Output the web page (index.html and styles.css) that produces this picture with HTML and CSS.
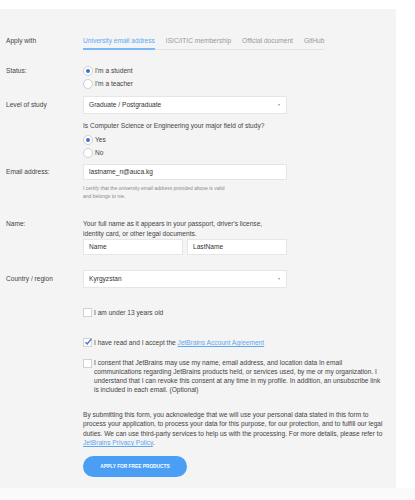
FILE: index.html
```html
<!DOCTYPE html>
<html lang="en">
<head>
    <meta charset="UTF-8">
    <title>Apply for free products</title>
    <link rel="stylesheet" href="styles.css">
</head>
<body>
    <div id="panel">
        <div class="row tabsRow">
            <div class="label">Apply with</div>
            <div class="tabs">
                <div class="tab active">University email address</div>
                <div class="tab">ISIC/ITIC membership</div>
                <div class="tab">Official document</div>
                <div class="tab">GitHub</div>
            </div>
        </div>

        <div class="row statusRow">
            <div class="label line">Status:</div>
            <div class="field">
                <div class="line"><span class="radio on"></span>I'm a student</div>
                <div class="line"><span class="radio"></span>I'm a teacher</div>
            </div>
        </div>

        <div class="row levelRow">
            <div class="label boxLabel">Level of study</div>
            <div class="field">
                <div class="select">Graduate / Postgraduate<span class="caret">&#9662;</span></div>
                <div class="question">Is Computer Science or Engineering your major field of study?</div>
                <div class="line"><span class="radio on"></span>Yes</div>
                <div class="line"><span class="radio"></span>No</div>
            </div>
        </div>

        <div class="row emailRow">
            <div class="label emailLabel">Email address:</div>
            <div class="field">
                <div class="text wide">lastname_n@auca.kg</div>
                <div class="hint">I certify that the university email address provided above is valid<br>and belongs to me.</div>
            </div>
        </div>

        <div class="row nameRow">
            <div class="label nameLabel">Name:</div>
            <div class="field">
                <div class="desc">Your full name as it appears in your passport, driver's license,<br>identity card, or other legal documents.</div>
                <div class="names">
                    <div class="text">Name</div>
                    <div class="text">LastName</div>
                </div>
            </div>
        </div>

        <div class="row countryRow">
            <div class="label boxLabel">Country / region</div>
            <div class="field">
                <div class="select">Kyrgyzstan<span class="caret">&#9662;</span></div>
            </div>
        </div>

        <div class="checks">
            <div class="line under13"><span class="check"></span>I am under 13 years old</div>
            <div class="line accept"><span class="check on"><svg width="8" height="8" viewBox="0 0 8 8"><path d="M1.5 4.2 L3.2 6 L7.4 0.8" fill="none" stroke="#3f73d8" stroke-width="1.3"/></svg></span>I have read and I accept the&nbsp;<a href="#">JetBrains Account Agreement</a></div>
            <div class="consent"><span class="check"></span><p>I consent that JetBrains may use my name, email address, and location data In email communications regarding JetBrains products held, or services used, by me or my organization. I understand that I can revoke this consent at any time in my profile. In addition, an unsubscribe link is included in each email. (Optional)</p></div>
            <p class="notice">By submitting this form, you acknowledge that we will use your personal data stated in this form to process your application, to process your data for this purpose, for our protection, and to fulfill our legal duties. We can use third-party services to help us with the processing. For more details, please refer to <a href="#">JetBrains Privacy Policy</a>.</p>
            <button>APPLY FOR FREE PRODUCTS</button>
        </div>
    </div>
    <div id="below"></div>
</body>
</html>
```

FILE: styles.css
```css
body {
    margin: 0;
    padding-top: 9px;
    font-family: 'Liberation Sans', Arial, sans-serif;
    font-size: 6.6px;
    color: #444;
    background: #fff;
}
#panel {
    width: 396px;
    box-sizing: border-box;
    background: #f4f4f4;
    padding: 27px 0 11px 0;
}
#below {
    width: 415px;
    height: 15px;
    background: #fafafa;
}
.row {
    display: flex;
}
.label {
    width: 83px;
    padding-left: 6px;
    box-sizing: border-box;
    flex: none;
    color: #444;
}
.field {
    flex: none;
}
.line {
    height: 13px;
    line-height: 13px;
    display: flex;
    align-items: center;
}
.tabs {
    display: flex;
    gap: 11px;
    border-bottom: 1px solid #e4e4e4;
}
.tabsRow .label {
    line-height: 9px;
}
.tab {
    line-height: 9px;
    padding-bottom: 3px;
    color: #999;
}
.tab.active {
    color: #5ea6f2;
    border-bottom: 2px solid #7cb8f5;
    margin-bottom: -1px;
}
.statusRow {
    margin-top: 14px;
}
.radio {
    width: 8px;
    height: 8px;
    border: 1px solid #cfcfcf;
    border-radius: 50%;
    background: #fff;
    margin-right: 2px;
    box-sizing: content-box;
    display: inline-block;
    position: relative;
}
.radio.on::after {
    content: "";
    position: absolute;
    left: 2px;
    top: 2px;
    width: 4px;
    height: 4px;
    border-radius: 50%;
    background: #3f6fd6;
}
.levelRow {
    margin-top: 6px;
}
.boxLabel {
    line-height: 18px;
}
.select {
    width: 204px;
    height: 18px;
    box-sizing: border-box;
    background: #fff;
    border: 1px solid #e6e6e6;
    padding: 0 5px;
    line-height: 16px;
    color: #333;
    display: flex;
    justify-content: space-between;
}
.caret {
    font-size: 4px;
    color: #999;
    margin-right: 1px;
}
.question {
    margin-top: 7px;
    line-height: 9px;
}
.levelRow .question + .line {
    margin-top: 3px;
}
.emailRow {
    margin-top: 5px;
}
.emailLabel {
    line-height: 16px;
}
.text {
    color: #333;
    height: 16px;
    line-height: 14px;
    box-sizing: border-box;
    border: 1px solid #e6e6e6;
    background: #fff;
    padding: 0 5px;
    width: 100px;
}
.text.wide {
    width: 204px;
}
.hint {
    margin-top: 4px;
    font-size: 5px;
    line-height: 8px;
    color: #8a8a8a;
}
.nameRow {
    margin-top: 19px;
}
.nameLabel, .desc {
    line-height: 9.5px;
}
.names {
    margin-top: 1px;
    display: flex;
    gap: 4px;
}
.countryRow {
    margin-top: 15px;
}
.checks {
    padding-left: 83px;
    width: 310px;
}
.check {
    width: 7px;
    height: 7px;
    border: 1px solid #d2d2d2;
    background: #fff;
    margin-right: 2px;
    flex: none;
    display: inline-block;
    position: relative;
}
.check svg {
    position: absolute;
    left: 0;
    top: -1px;
}
.under13 {
    margin-top: 18px;
}
.accept {
    margin-top: 17px;
}
a {
    color: #5ea6f2;
}
.consent {
    margin-top: 9px;
    display: flex;
    align-items: flex-start;
}
.consent .check {
    margin-top: 0.5px;
}
.consent p {
    margin: 0;
    line-height: 9px;
    width: 290px;
}
.notice {
    margin: 16px 0 0 0;
    line-height: 9.3px;
}
button {
    margin-top: 9px;
    width: 104px;
    height: 21px;
    border: none;
    border-radius: 11px;
    background: #4a9ff4;
    color: #fff;
    font-family: 'Liberation Sans', Arial, sans-serif;
    font-size: 4.8px;
    font-weight: bold;
    padding: 0;
    cursor: pointer;
}
```
